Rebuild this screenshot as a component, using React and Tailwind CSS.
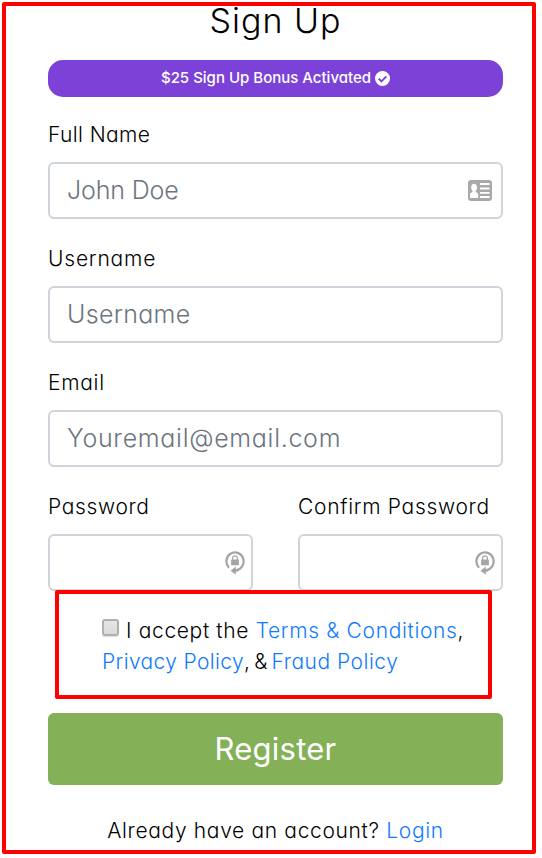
import React, { useState } from 'react';

const IdCardIcon = () => (
  <svg width="24" height="21" viewBox="0 0 24 21" aria-hidden="true">
    <rect width="24" height="21" rx="3" fill="#a9a9a9" />
    <path
      d="M2 18v-3c0-1.600 1-2.500 2.600-2.900v-1.300C3.700 10 3.200 9 3.200 7.200c0-2.200 1.200-3.500 2.900-3.500S9 5 9 7.200c0 1.800-.5 2.800-1.400 3.600v1.300c1.600.4 2.600 1.300 2.600 2.900v3z"
      fill="#fff"
    />
    <path d="M12 4h9.500M12 8.500h9.500M12 12.800h9.500M12 17h9.500" stroke="#fff" strokeWidth="1.800" />
  </svg>
);

const LockResetIcon = () => (
  <svg width="20" height="25" viewBox="0 0 20 25" aria-hidden="true">
    <path d="M4 17.800A8.600 9 0 1 1 11 20.300" fill="none" stroke="#a5a5a5" strokeWidth="2.200" />
    <path d="M5.500 20.700l5.300-4.300v2.800h2v2.600h-2v3z" fill="#a5a5a5" />
    <rect x="6.100" y="9.500" width="7.800" height="5.700" rx=".5" fill="#a5a5a5" />
    <path d="M7.600 10V8.200a2.400 2.400 0 0 1 4.800 0V10" fill="none" stroke="#a5a5a5" strokeWidth="1.200" />
  </svg>
);

const BonusCheckIcon = () => (
  <svg width="15" height="15" viewBox="0 0 15 15" aria-hidden="true">
    <circle cx="7.500" cy="7.500" r="7.500" fill="#fff" />
    <path d="M3.700 7.700l2.700 2.700 5-5.100" fill="none" stroke="#7c42d8" strokeWidth="1.900" />
  </svg>
);

const Field = ({ id, label, labelClass, inputClass = '', iconClass = 'right-[8px] top-[16px]', type = 'text', placeholder, icon }) => {
  const [value, setValue] = useState('');

  return (
    <div>
      <label htmlFor={id} className={`block h-[31px] whitespace-nowrap text-[21px] leading-[31px] ${labelClass}`}>
        {label}
      </label>
      <div className="relative mt-3">
        <input
          id={id}
          type={type}
          value={value}
          placeholder={placeholder}
          onChange={(e) => setValue(e.target.value)}
          className={`block h-[57px] w-full rounded-md border-2 border-[#ced4da] bg-white px-[17px] pb-0.5 text-[25px] font-[350] placeholder:text-[#6c757d] focus:outline-none ${inputClass}`}
        />
        {icon && <span className={`absolute flex ${iconClass}`}>{icon}</span>}
      </div>
    </div>
  );
};

const App = () => {
  const [accepted, setAccepted] = useState(false);

  return (
    <div className="min-h-[858px] bg-white p-[2px] font-['Inter','Open_Sans',sans-serif] font-light text-black [font-feature-settings:'cv11']">
      <main className="h-[852px] w-[534px] rounded-[2px] border-4 border-[#ff0000] pl-[42px] pr-[29px]">
        <h1 className="-mt-1.5 h-[41px] whitespace-nowrap text-center text-[34px] leading-[41px] tracking-[1px]">Sign Up</h1>

        {/* Bonus banner */}
        <div className="mt-[19px] flex h-[37px] items-center justify-center gap-1 whitespace-nowrap rounded-[15px] bg-[#7c42d8] pb-px text-[15px] font-medium text-white">
          <span>$25 Sign Up Bonus Activated</span>
          <BonusCheckIcon />
        </div>

        <form onSubmit={(e) => e.preventDefault()}>
          <div className="mt-[22px] flex flex-col gap-6">
            <Field
              id="name"
              label="Full Name"
              labelClass="tracking-[0.4px]"
              inputClass="-tracking-[0.15px]"
              placeholder="John Doe"
              icon={<IdCardIcon />}
              iconClass="right-[11px] top-[18px]"
            />
            <Field id="username" label="Username" labelClass="tracking-[0.8px]" inputClass="tracking-[0.3px]" placeholder="Username" />
            <Field
              id="email"
              label="Email"
              labelClass="tracking-[0.7px]"
              inputClass="tracking-[0.7px]"
              type="email"
              placeholder="Youremail@email.com"
            />
            <div className="grid grid-cols-2 gap-[45px]">
              <Field id="password" label="Password" labelClass="tracking-[0.65px]" type="password" icon={<LockResetIcon />} />
              <Field id="confirm" label="Confirm Password" labelClass="tracking-[0.7px]" type="password" icon={<LockResetIcon />} />
            </div>
          </div>

          {/* Terms */}
          <div className="relative -mt-px ml-[7px] h-[109px] w-[437px] rounded-[2px] border-4 border-[#ff0000] pl-[43px] pt-[21px] text-[21px] leading-[31px]">
            <div className="flex whitespace-nowrap tracking-[0.65px]">
              <input
                type="checkbox"
                aria-label="Accept terms"
                checked={accepted}
                onChange={(e) => setAccepted(e.target.checked)}
                className="mr-[7px] mt-1 size-[17px] shrink-0 appearance-none rounded-[3px] border-2 border-[#b0b0b0] bg-linear-to-b from-[#e6e6e6] to-[#dadada] shadow-[0_1px_1px_#ddd] checked:bg-[#0d7bff]"
              />
              <span>
                I accept the <a href="#terms" className="text-[#107bff]">Terms &amp; Conditions</a>,
              </span>
            </div>
            <p className="whitespace-nowrap tracking-[0.35px]">
              <a href="#privacy" className="text-[#107bff]">Privacy Policy</a>
              <span className="-tracking-[0.8px]">, &amp; </span>
              <a href="#fraud" className="tracking-[0.5px] text-[#107bff]">Fraud Policy</a>
            </p>
          </div>

          <button type="submit" className="mt-3.5 block h-[72px] w-full rounded-md bg-[#84b057] text-[31px] font-normal tracking-[0.25px] text-white">
            Register
          </button>
        </form>

        <p className="mt-[30px] whitespace-nowrap text-center text-[21px] leading-[31px] tracking-[0.66px]">
          Already have an account? <a href="#login" className="text-[#107bff]">Login</a>
        </p>
      </main>
    </div>
  );
};

export default App;
